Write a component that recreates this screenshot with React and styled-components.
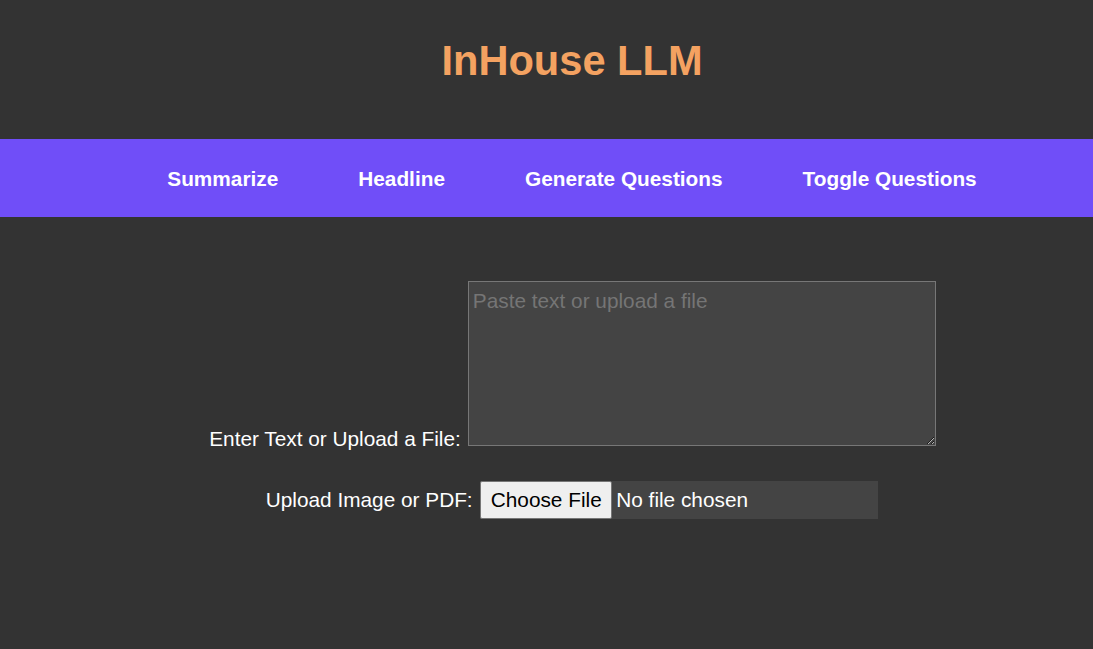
import React from "react";
import styled, { createGlobalStyle } from "styled-components";

const GlobalStyle = createGlobalStyle`
  html, body {
    margin: 0;
    padding: 0;
    background: #333333;
    font-family: "Liberation Sans", Arial, sans-serif;
    color: #ffffff;
  }
  #root {
    min-height: 100vh;
    background: #333333;
  }
`;

const Page = styled.div`
  min-height: 649px;
  background: #333333;
`;

const Header = styled.header`
  box-sizing: border-box;
  height: 139px;
  padding: 36.5px 0 0 51px;
  display: flex;
  justify-content: center;
  align-items: flex-start;
`;

const Title = styled.h1`
  margin: 0;
  font-size: 41.6px;
  font-weight: bold;
  line-height: normal;
  color: #f4a261;
`;

const NavBar = styled.nav`
  box-sizing: border-box;
  height: 78px;
  background: #704ef8;
  padding: 1px 0 0 51px;
  display: flex;
  justify-content: center;
  align-items: center;
  gap: 80px;
`;

const NavItem = styled.a`
  font-size: 20.8px;
  font-weight: bold;
  line-height: normal;
  color: #ffffff;
  text-decoration: none;
  cursor: pointer;
`;

const Main = styled.main`
  padding: 64px 0 0 51px;
  display: flex;
  flex-direction: column;
  align-items: center;
  gap: 35px;
`;

const Row = styled.div`
  display: flex;
  justify-content: center;
  align-items: ${(p) => (p.$bottom ? "flex-end" : "center")};
  gap: ${(p) => p.$gap}px;
  padding-left: ${(p) => p.$shift || 0}px;
`;

const Label = styled.label`
  font-size: 20.8px;
  line-height: normal;
  color: #ffffff;
  margin-bottom: ${(p) => (p.$bottom ? "-4.7px" : "0")};
`;

const TextArea = styled.textarea`
  box-sizing: border-box;
  width: 468px;
  height: 165px;
  margin: 0;
  padding: 7px 2px 2px 4px;
  background: #444444;
  border: 1px solid #777777;
  color: #ffffff;
  font-family: "Liberation Sans", Arial, sans-serif;
  font-size: 20.8px;
  line-height: normal;
  outline: none;
  &::placeholder {
    color: #757575;
  }
`;

const FileInput = styled.input`
  box-sizing: border-box;
  width: 398px;
  height: 38px;
  margin: 0;
  padding: 0;
  border: none;
  background: #444444;
  color: #ffffff;
  font-family: "Liberation Sans", Arial, sans-serif;
  font-size: 20.8px;
  line-height: normal;
  &::file-selector-button {
    box-sizing: border-box;
    height: 38px;
    margin: 0 4px 0 0;
    padding: 0 9.5px;
    border: 1px solid #767676;
    border-radius: 2px;
    background: #efefef;
    color: #000000;
    font-family: inherit;
    font-size: 20.8px;
  }
`;

export default function App() {
  return (
    <Page>
      <GlobalStyle />
      <Header>
        <Title>InHouse LLM</Title>
      </Header>
      <NavBar>
        <NavItem>Summarize</NavItem>
        <NavItem>Headline</NavItem>
        <NavItem>Generate Questions</NavItem>
        <NavItem>Toggle Questions</NavItem>
      </NavBar>
      <Main>
        <Row $bottom $gap={7} $shift={1}>
          <Label $bottom htmlFor="text-input">Enter Text or Upload a File:</Label>
          <TextArea id="text-input" placeholder="Paste text or upload a file" />
        </Row>
        <Row $gap={7.6} $shift={-1}>
          <Label htmlFor="file-input">Upload Image or PDF:</Label>
          <FileInput id="file-input" type="file" accept="image/*,application/pdf" />
        </Row>
      </Main>
    </Page>
  );
}
